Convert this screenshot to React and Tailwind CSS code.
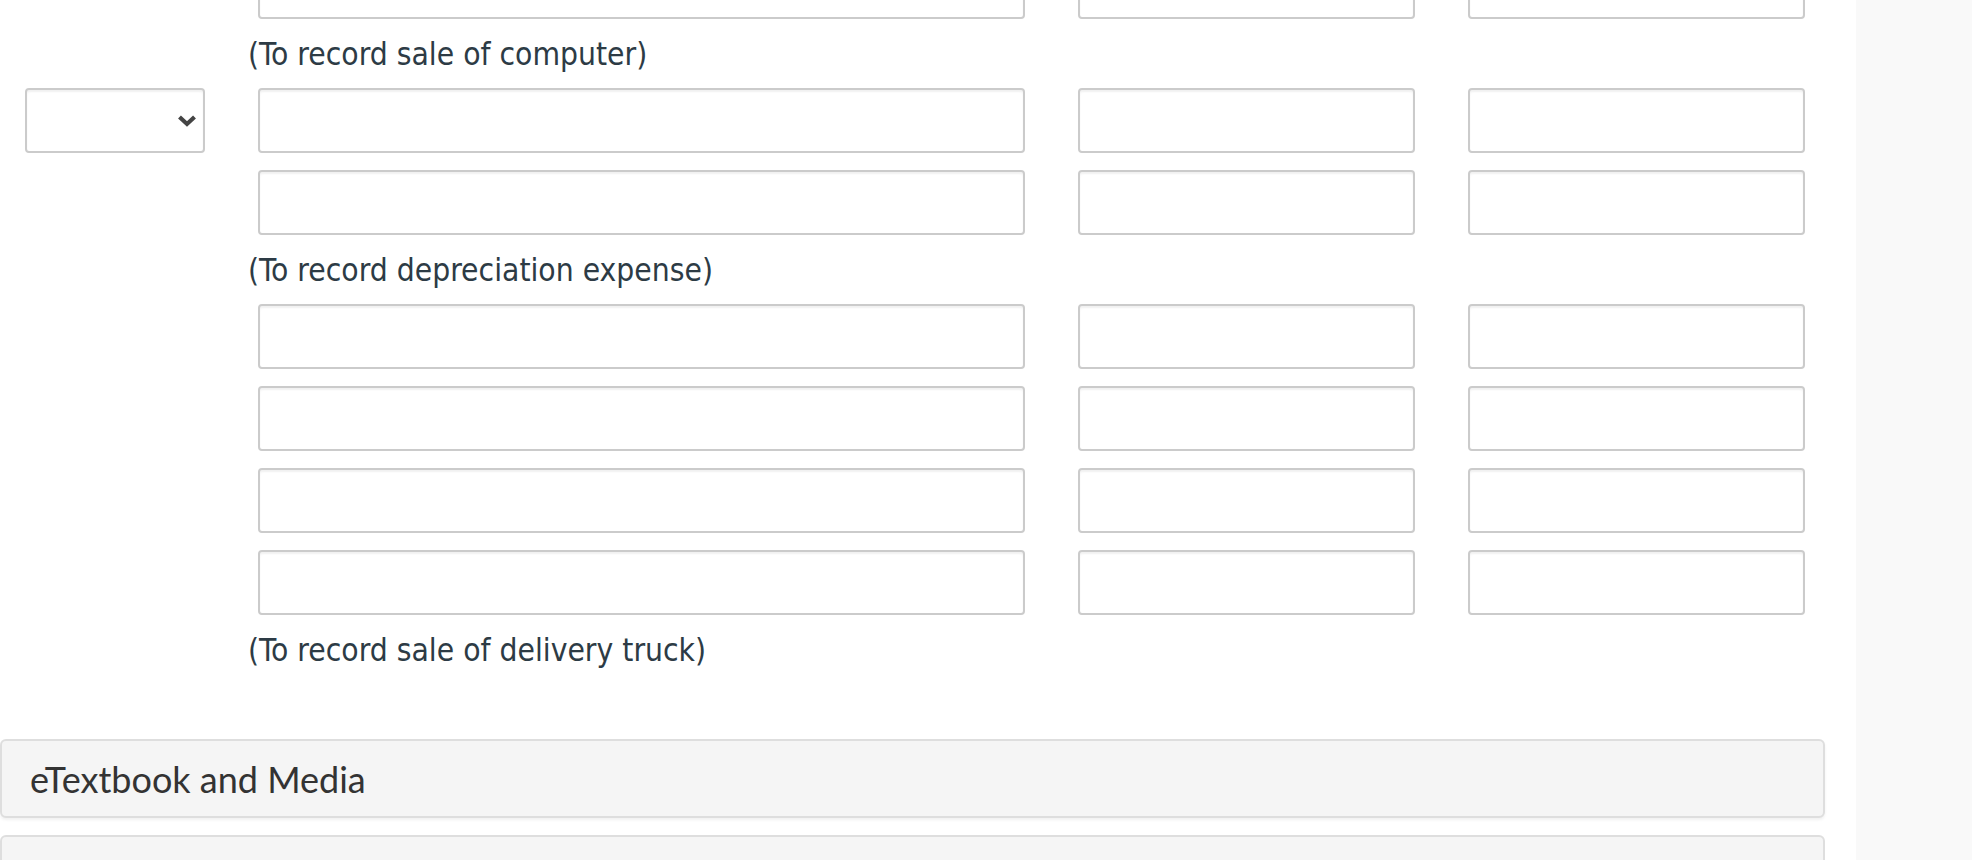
import React from "react";

const inputCls =
  "h-[65px] bg-white border-2 border-[#cbcbcb] rounded-[4px] shadow-[inset_0_2px_2px_rgba(0,0,0,0.06)]";

function Row({ withSelect }) {
  return (
    <div className="flex h-[65px] pl-[25px] shrink-0">
      {withSelect ? (
        <div className={`${inputCls} w-[180px] relative flex items-center justify-end pr-[6px]`}>
          <svg width="20" height="14" viewBox="0 0 20 14">
            <path d="M2.5 3 L10 10 L17.5 3" fill="none" stroke="#444" strokeWidth="4.2" />
          </svg>
        </div>
      ) : (
        <div className="w-[180px]" />
      )}
      <div className={`${inputCls} w-[767px] ml-[53px]`} />
      <div className={`${inputCls} w-[337px] ml-[53px]`} />
      <div className={`${inputCls} w-[337px] ml-[53px]`} />
    </div>
  );
}

function Caption({ children }) {
  return (
    <div
      className="h-[69px] shrink-0 flex items-center pl-[248px] text-[31.5px] text-[#2d3b45] pt-[3px]"
      style={{ fontFamily: '"DejaVu Sans Condensed", "DejaVu Sans", sans-serif' }}
    >
      {children}
    </div>
  );
}

export default function App() {
  return (
    <div className="flex w-full h-[860px] overflow-hidden bg-white">
      <div className="w-[1856px] shrink-0 flex flex-col">
        <div className="flex flex-col mt-[-46px]">
          <Row />
          <Caption>(To record sale of computer)</Caption>
          <Row withSelect />
          <div className="h-[17px]" />
          <Row />
          <Caption>(To record depreciation expense)</Caption>
          <Row />
          <div className="h-[17px]" />
          <Row />
          <div className="h-[17px]" />
          <Row />
          <div className="h-[17px]" />
          <Row />
          <Caption>(To record sale of delivery truck)</Caption>
          <div className="h-[55px]" />
          <div
            className="w-[1825px] h-[79px] shrink-0 bg-[#f5f5f5] border-2 border-[#dedede] rounded-[6px] shadow-[0_2px_3px_rgba(0,0,0,0.06)] flex items-center pl-[28px] text-[36px] text-[#333333]"
            style={{ fontFamily: 'Lato, sans-serif' }}
          >
            eTextbook and Media
          </div>
          <div className="h-[17px]" />
          <div className="w-[1825px] h-[79px] shrink-0 bg-[#f5f5f5] border-2 border-[#dedede] rounded-[6px]" />
        </div>
      </div>
      <div className="flex-1 bg-[#f9f9f9]" />
    </div>
  );
}
